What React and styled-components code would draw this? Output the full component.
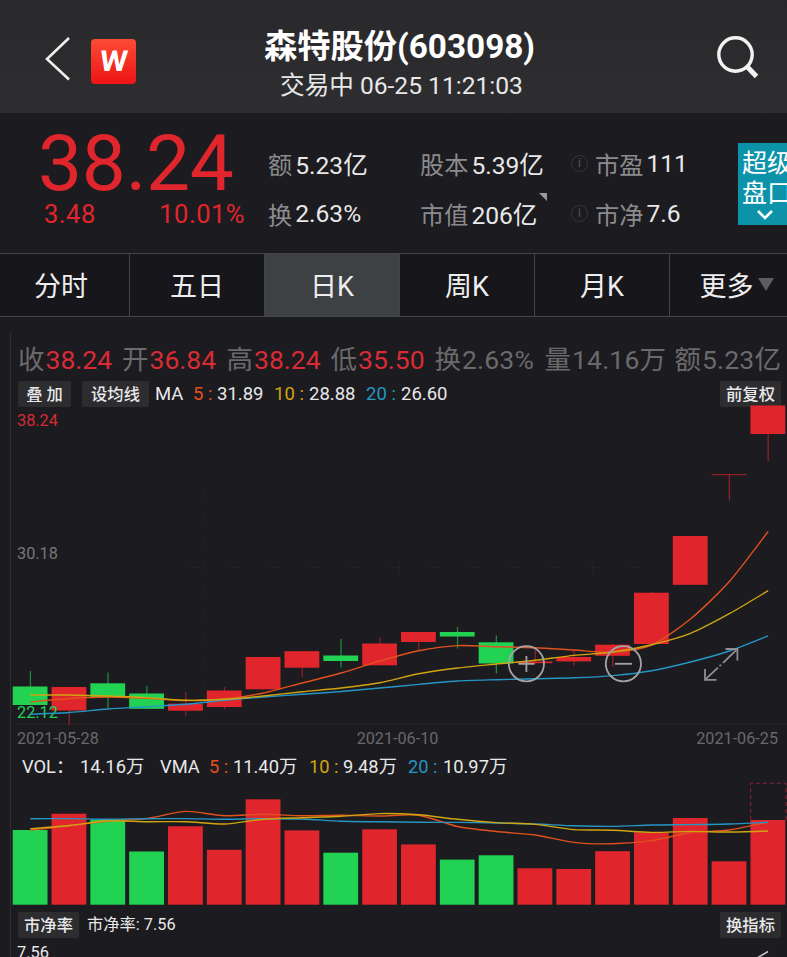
import React from 'react'
import styled, { createGlobalStyle } from 'styled-components'

const GlobalStyle = createGlobalStyle`
    * {
        box-sizing: border-box;
    }
    body {
        margin: 0;
        background: #1c1b1f;
        font-family: Roboto, "Noto Sans CJK SC", sans-serif;
        overflow: hidden;
    }
`

const red = '#e0262c'
const green = '#22d353'
const orange = '#e0511e'
const yellow = '#cfa510'
const blue = '#2596c4'

const Screen = styled.div`
    width: 787px;
    height: 957px;
    display: flex;
    flex-direction: column;
    overflow: hidden;
    background: #1c1b1f;
    color: #e8e8ea;
    white-space: nowrap;
`

/*Title bar*/
const Header = styled.header`
    height: 113px;
    flex: none;
    display: grid;
    grid-template-columns: 200px 1fr 188px;
    background: linear-gradient(#29292c, #2e2e31);
`
const HeaderLeft = styled.div`
    display: flex;
    align-items: flex-start;
    padding: 36px 0 0 44px;
    gap: 20px;
`
const HeaderRight = styled.div`
    display: flex;
    justify-content: flex-end;
    align-items: flex-start;
    padding: 35px 28px 0 0;
`
const Logo = styled.div`
    width: 45px;
    height: 45px;
    margin-top: 3px;
    border-radius: 4px;
    background: linear-gradient(#fb4b35, #ee1414);
    display: flex;
    align-items: center;
    justify-content: center;
    color: #fff;
    font-size: 29px;
    font-weight: 700;
    line-height: 45px;

    span {
        transform: skewX(-5deg) scaleX(1.1);
    }
`
const Titles = styled.div`
    text-align: center;
    padding-top: 27px;
`
const Title = styled.h1`
    margin: 0;
    color: #fff;
    font-size: 33.3px;
    font-weight: 700;
    line-height: 40px;
`
const Status = styled.p`
    margin: 0;
    padding-left: 4px;
    font-size: 24.6px;
    line-height: 38px;
`

/*Quote*/
const Quote = styled.section`
    height: 140px;
    flex: none;
    display: flex;
    padding-top: 13px;
`
const PriceBox = styled.div`
    width: 268px;
    padding-left: 38px;
    color: ${red};
`
const Price = styled.div`
    font-size: 78.5px;
    line-height: 75px;
    height: 75px;
    letter-spacing: -0.3px;
`
const Change = styled.div`
    display: flex;
    justify-content: space-between;
    padding: 0 23px 0 6px;
    font-size: 25.5px;
    line-height: 26px;
    letter-spacing: 0.5px;
`
const Stats = styled.div`
    display: grid;
    grid-template-columns: 152px 151px 167px;
    grid-template-rows: 50px 50px;
    padding-top: 13px;
    align-content: start;
`
const Stat = styled.div`
    position: relative;
    display: flex;
    align-items: center;
    height: 48px;
    gap: 3px;
    font-size: 24.6px;
`
const StatLabel = styled.span`
    color: #8b8b8e;
    font-size: 24.2px;
`
const Info = styled.span`
    width: 17px;
    height: 17px;
    margin-right: 4px;
    border: 1.5px solid #36393b;
    border-radius: 50%;
    color: #55585b;
    font-size: 12px;
    line-height: 14px;
    text-align: center;
`
const Corner = styled.i`
    position: absolute;
    right: 24px;
    top: 4px;
    border-top: 8px solid #9a9a9a;
    border-left: 8px solid transparent;
`
const SuperPanel = styled.button`
    width: 49px;
    height: 82px;
    margin-top: 17px;
    padding: 6px 0 0 4px;
    border: 0;
    overflow: hidden;
    background: #0d93a9;
    color: #fff;
    font: inherit;
    font-size: 25px;
    line-height: 30px;
    text-align: left;
    display: flex;
    flex-direction: column;
    align-items: flex-start;

    svg {
        flex: none;
        margin: 0 0 0 14px;
    }
`

/*Period tabs*/
const Tabs = styled.nav`
    height: 64px;
    flex: none;
    display: grid;
    grid-template-columns: 130px 135px 135px 135px 135px 117px;
    border-top: 1px solid #424447;
    border-bottom: 1px solid #424447;
`
const Tab = styled.div`
    display: flex;
    align-items: center;
    justify-content: center;
    padding: 0 ${p => (p.$first ? 7 : 0)}px 2px 0;
    border-right: ${p => (p.$last ? 0 : 1)}px solid #424447;
    background: ${p => (p.$active ? '#3e4144' : '#17161a')};
    color: #eeeef0;
    font-size: 27px;
`
const Arrow = styled.i`
    margin: 0 -16px 0 4px;
    border-top: 13px solid #5c5d5f;
    border-left: 8px solid transparent;
    border-right: 8px solid transparent;
`

/*Chart*/
const Panel = styled.main`
    flex: 1;
    min-height: 0;
    margin: 15px 0 0 10px;
    border-left: 1px solid #2f2f32;
`
const Ohlc = styled.div`
    display: grid;
    grid-template-columns: 104px 104.5px 104px 104px 110px 130px auto;
    padding: 8px 0 0 7px;
    height: 48px;
    line-height: 40px;
    color: #6a6a6c;
    font-size: 26.5px;
`
const Value = styled.span`
    color: ${p => (p.$red ? '#d82b35' : 'inherit')};
    letter-spacing: ${p => (p.$red ? 0 : 0.2)}px;
    margin-left: 1px;
`
const ToolRow = styled.div`
    display: flex;
    align-items: center;
    height: 27px;
    padding: 0 6px 0 7px;
    font-size: 18.5px;
`
const Chip = styled.span`
    width: ${p => p.$w}px;
    height: 26px;
    margin-right: ${p => p.$gap || 0}px;
    background: #2d2d30;
    border-radius: 2px;
    font-size: 16.3px;
    font-weight: 500;
    line-height: 27px;
    text-align: center;
`
const Reading = styled.span`
    font-size: 16.3px;
    line-height: 27px;
`
const Spacer = styled.span`
    flex: 1;
`
const Legend = styled.span`
    width: ${p => p.$w}px;
    flex: none;
    color: ${p => p.$color || 'inherit'};
`
const Pane = styled.div`
    position: relative;
    height: ${p => p.$h}px;
    margin-left: -11px;

    > svg {
        display: block;
        overflow: visible;
    }
`
const AxisLabel = styled.span`
    position: absolute;
    left: 17px;
    top: ${p => p.$top}px;
    color: ${p => p.$color};
    font-size: 16.3px;
    line-height: 20px;
`
const Overlay = styled.svg`
    position: absolute;
    left: 0;
    top: 0;
`
const Dates = styled.div`
    display: flex;
    justify-content: space-between;
    height: 29px;
    padding: 1px 9px 0 6px;
    color: #68686b;
    font-size: 16.2px;
    line-height: 27px;
`
const VolRow = styled.div`
    display: flex;
    align-items: baseline;
    height: 28px;
    padding-left: 11px;
    font-size: 18.3px;
    line-height: 27px;
`
const LastRow = styled.div`
    display: flex;
    justify-content: space-between;
    padding: 5px 18px 0 6px;
    font-size: 16.4px;
    line-height: 20px;
`

// [up, body top, body bottom, high, low, volume top]
const days = [
    [0, 686.5, 705, 671, 705, 830],
    [1, 687, 710.5, 687, 725, 813.7],
    [0, 683.3, 697.3, 672.5, 708, 819.5],
    [0, 693.5, 708.8, 686, 709, 851.5],
    [1, 703.7, 710.7, 692, 715.7, 826.3],
    [1, 690.5, 707, 687, 709, 849.8],
    [1, 657, 689.3, 657, 689, 799.3],
    [1, 651.2, 667.7, 651, 677, 830.4],
    [0, 655.5, 661, 639, 667.5, 852.7],
    [1, 643.5, 665.3, 637.5, 665, 829.3],
    [1, 632, 642, 632, 650, 844.4],
    [0, 632, 636.5, 627, 648.5, 859.6],
    [0, 642.3, 663.5, 635.5, 673.5, 855.3],
    [1, 661.5, 663.2, 650, 664, 868.3],
    [1, 657, 661.4, 650, 665.8, 869],
    [1, 644.7, 655.8, 644, 666.7, 851.2],
    [1, 592.7, 644, 592, 644, 832.3],
    [1, 536, 584.8, 536, 584, 818],
    [1, 474, 475.2, 474, 500.5, 861.3],
    [1, 405.5, 434, 405, 461.5, 820],
]

const ma5 = [702, 698.5, 697, 698.3, 700.5, 699, 693, 683, 673, 661, 650.7, 645.6, 646.7, 647.7, 650, 652.2, 645, 619, 581.5, 531.5]
const ma10 = [695, 695, 696, 697.6, 700.3, 699.3, 696, 691.8, 688, 682.7, 673.7, 668, 664, 660.2, 655.4, 652, 644.7, 633.3, 613.7, 590.7]
const ma20 = [714.3, 712.5, 709, 706.7, 704.3, 700.3, 697, 694.3, 691.5, 688, 684.4, 681, 679.7, 678.7, 677.8, 675.6, 670.7, 662, 651, 635.8]
const vma5 = [830, 826, 821, 818.5, 811.4, 815.7, 814.3, 815.8, 815.3, 816, 815.3, 826.5, 831.5, 835, 842.4, 843.8, 840.6, 832.7, 830, 822]
const vma10 = [828.7, 825.5, 820.8, 821.7, 821.7, 824, 819.3, 817.7, 816.2, 813.6, 814.8, 819.3, 822.6, 824.4, 829.6, 830.2, 832.4, 831.4, 832, 831]
const vma20 = [818.8, 818.6, 819.2, 818.7, 818.6, 819.2, 818.7, 819, 821.3, 821.8, 822.3, 822.4, 823, 824, 825.8, 826.4, 825, 824.6, 824, 822.3]

const step = 38.83
const left = i => 12.7 + i * step
const mid = i => 30.4 + i * step

// smooth line through the middle of every day
const curve = ys => {
    const pts = ys.map((y, i) => [mid(i), y])
    let d = `M${pts[0]}`
    for (let i = 0; i < pts.length - 1; i++) {
        const a = pts[i - 1] || pts[i]
        const b = pts[i]
        const c = pts[i + 1]
        const e = pts[i + 2] || c
        d += `C${b[0] + (c[0] - a[0]) / 8},${b[1] + (c[1] - a[1]) / 8} ${c[0] - (e[0] - b[0]) / 8},${c[1] - (e[1] - b[1]) / 8} ${c}`
    }
    return d
}

const Line = ({ data, color }) => (
    <path d={curve(data)} fill="none" stroke={color} strokeWidth="1.4" />
)

const Candles = () => (
    <svg width="787" height="317" viewBox="0 407 787 317">
        <g stroke="#232226">
            <path d="M204.5 488V724M399.5 563v20M592.5 563v20" strokeDasharray="10 14" />
            <path d="M190 567.5H640" strokeDasharray="10 30" />
        </g>
        <path d="M17 724H787" stroke="#2e2528" />
        {days.map(([up, top, bottom, high, low], i) => (
            <g key={i}>
                <path
                    d={`M${mid(i)} ${high}V${low}`}
                    stroke={up ? '#8e2127' : '#1d8a3c'}
                    strokeWidth="1.3"
                />
                <rect x={left(i)} y={top} width="34.8" height={bottom - top} fill={up ? red : green} opacity={i === 18 ? 0.6 : 1} />
            </g>
        ))}
    </svg>
)

const Averages = () => (
    <Overlay width="787" height="317" viewBox="0 407 787 317">
        <Line data={ma5} color={orange} />
        <Line data={ma20} color={blue} />
        <Line data={ma10} color={yellow} />
        <g fill="none" stroke="#a5a3a8" strokeWidth="1.8">
            <circle cx="526.4" cy="663.8" r="17.6" />
            <path d="M518.5 663.8h16M526.4 656v16" />
            <circle cx="623.4" cy="663.8" r="17.6" />
            <path d="M615 663.8h17" />
        </g>
        <g fill="none" stroke="#8f8e92" strokeWidth="1.8">
            <path d="M725.5 649H737.4V660.5M705 669V679.8H716.5" />
            <path d="M737 649.4L723 662.8M721 664.8L719.5 666.2M718 667.600L705.4 679.4" />
        </g>
    </Overlay>
)

const Volumes = () => (
    <svg width="787" height="125" viewBox="0 781 787 125">
        {days.map((d, i) => (
            <rect key={i} x={left(i)} y={d[5]} width="34.8" height={904.7 - d[5]} fill={d[0] ? red : green} />
        ))}
        <path d="M750.7 904V783.2H786V820" fill="none" stroke="#8d2438" strokeDasharray="4 3" />
        <Line data={vma5} color={orange} />
        <Line data={vma20} color={blue} />
        <Line data={vma10} color={yellow} />
    </svg>
)

const App = () => (
    <>
        <GlobalStyle />
        <Screen>
            <Header>
                <HeaderLeft>
                    <svg width="27" height="46" fill="none" stroke="#eee" strokeWidth="2.6">
                        <path d="M25 2L3 23L25 43.500" />
                    </svg>
                    <Logo><span>W</span></Logo>
                </HeaderLeft>
                <Titles>
                    <Title>森特股份(603098)</Title>
                    <Status>交易中 06-25 11:21:03</Status>
                </Titles>
                <HeaderRight>
                    <svg width="43" height="44" fill="none" stroke="#f2f2f2">
                        <circle cx="19.500" cy="19.500" r="16.700" strokeWidth="3.400" />
                        <path d="M31 31.500L40.500 41.500" strokeWidth="5" />
                    </svg>
                </HeaderRight>
            </Header>

            <Quote>
                <PriceBox>
                    <Price>38.24</Price>
                    <Change>
                        <span>3.48</span>
                        <span>10.01%</span>
                    </Change>
                </PriceBox>
                <Stats>
                    <Stat><StatLabel>额</StatLabel>5.23亿</Stat>
                    <Stat><StatLabel>股本</StatLabel>5.39亿</Stat>
                    <Stat><Info>i</Info><StatLabel>市盈</StatLabel>111</Stat>
                    <Stat><StatLabel>换</StatLabel>2.63%</Stat>
                    <Stat><StatLabel>市值</StatLabel>206亿<Corner /></Stat>
                    <Stat><Info>i</Info><StatLabel>市净</StatLabel>7.6</Stat>
                </Stats>
                <SuperPanel>
                    <span>超级</span>
                    <span>盘口</span>
                    <svg width="18" height="12" fill="none" stroke="#fff" strokeWidth="2.600">
                        <path d="M2 2L9 9L16 2" />
                    </svg>
                </SuperPanel>
            </Quote>

            <Tabs>
                <Tab $first>分时</Tab>
                <Tab>五日</Tab>
                <Tab $active>日K</Tab>
                <Tab>周K</Tab>
                <Tab>月K</Tab>
                <Tab $last>更多<Arrow /></Tab>
            </Tabs>

            <Panel>
                <Ohlc>
                    <div>收<Value $red>38.24</Value></div>
                    <div>开<Value $red>36.84</Value></div>
                    <div>高<Value $red>38.24</Value></div>
                    <div>低<Value $red>35.50</Value></div>
                    <div>换<Value>2.63%</Value></div>
                    <div>量<Value>14.16万</Value></div>
                    <div>额<Value>5.23亿</Value></div>
                </Ohlc>
                <ToolRow>
                    <Chip $w={53} $gap={11}>叠 加</Chip>
                    <Chip $w={67} $gap={6}>设均线</Chip>
                    <Legend $w={38}>MA</Legend>
                    <Legend $w={24} $color={orange}>5 :</Legend>
                    <Legend $w={57}>31.89</Legend>
                    <Legend $w={35} $color={yellow}>10 :</Legend>
                    <Legend $w={57}>28.88</Legend>
                    <Legend $w={35} $color={blue}>20 :</Legend>
                    <Legend>26.60</Legend>
                    <Spacer />
                    <Chip $w={61}>前复权</Chip>
                </ToolRow>
                <Pane $h={317}>
                    <Candles />
                    <AxisLabel $top={4} $color="#d82b35">38.24</AxisLabel>
                    <AxisLabel $top={137} $color="#77777a">30.18</AxisLabel>
                    <AxisLabel $top={296} $color={green}>22.12</AxisLabel>
                    <Averages />
                </Pane>
                <Dates>
                    <span>2021-05-28</span>
                    <span>2021-06-10</span>
                    <span>2021-06-25</span>
                </Dates>
                <VolRow>
                    <Legend $w={58}>VOL：</Legend>
                    <Legend $w={80}>14.16万</Legend>
                    <Legend $w={49}>VMA</Legend>
                    <Legend $w={24} $color={orange}>5 :</Legend>
                    <Legend $w={76}>11.40万</Legend>
                    <Legend $w={34} $color={yellow}>10 :</Legend>
                    <Legend $w={65}>9.48万</Legend>
                    <Legend $w={35} $color={blue}>20 :</Legend>
                    <Legend>10.97万</Legend>
                </VolRow>
                <Pane $h={130}>
                    <Volumes />
                </Pane>
                <ToolRow>
                    <Chip $w={61} $gap={8}>市净率</Chip>
                    <Reading>市净率: 7.56</Reading>
                    <Spacer />
                    <Chip $w={61}>换指标</Chip>
                </ToolRow>
                <LastRow>
                    <span>7.56</span>
                    <svg width="12" height="20" fill="none" stroke="#c8c8c8" strokeWidth="1.500">
                        <path d="M0 15L11 8.500" />
                    </svg>
                </LastRow>
            </Panel>
        </Screen>
    </>
)

export default App
